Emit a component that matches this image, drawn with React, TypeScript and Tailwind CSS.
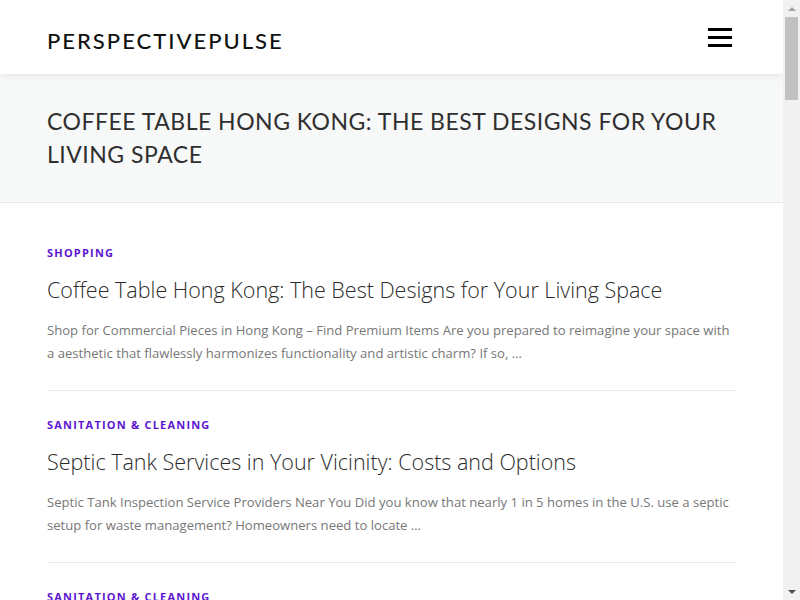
type Post = {
  category: string;
  title: string;
  excerpt: string;
};

const posts: Post[] = [
  {
    category: "Shopping",
    title: "Coffee Table Hong Kong: The Best Designs for Your Living Space",
    excerpt:
      "Shop for Commercial Pieces in Hong Kong – Find Premium Items Are you prepared to reimagine your space with a aesthetic that flawlessly harmonizes functionality and artistic charm? If so, …",
  },
  {
    category: "Sanitation & Cleaning",
    title: "Septic Tank Services in Your Vicinity: Costs and Options",
    excerpt:
      "Septic Tank Inspection Service Providers Near You Did you know that nearly 1 in 5 homes in the U.S. use a septic setup for waste management? Homeowners need to locate …",
  },
  {
    category: "Sanitation & Cleaning",
    title: "Septic Tank Pumping: How Often Should You Schedule It?",
    excerpt:
      "Septic Pumping Schedules Explained Keeping a septic system in good shape takes more than flushing with care. Regular pumping keeps …",
  },
];

const PostItem = ({ post }: { post: Post }) => (
  <article className="pt-[26px] pb-[25px] border-b border-[#e8e8e8]">
    <div className="text-[11px] leading-4 font-bold uppercase tracking-[1.2px] text-[#5c16d2]">
      {post.category}
    </div>
    <h2 className="mt-3.5 text-[21.5px] leading-[30px] font-light text-[#2b2b2b]">
      {post.title}
    </h2>
    <p className="mt-3.5 text-[13.1px] leading-[23px] text-[#777]">
      {post.excerpt}
    </p>
  </article>
);

const FakeScrollbar = () => (
  <div className="w-[17px] h-full bg-[#f1f1f1] flex flex-col items-center">
    <div className="h-[17px] flex items-center justify-center">
      <div className="w-0 h-0 border-x-[4px] border-x-transparent border-b-[4px] border-b-[#a3a3a3]" />
    </div>
    <div className="w-[13px] h-[83px] bg-[#c1c1c1]" />
    <div className="flex-1" />
    <div className="h-[17px] flex items-center justify-center">
      <div className="w-0 h-0 border-x-[4px] border-x-transparent border-t-[4px] border-t-[#505050]" />
    </div>
  </div>
);

export default function App() {
  return (
    <div className="h-screen w-full flex overflow-hidden bg-white font-['Open_Sans',sans-serif]">
      <div className="flex-1 h-full overflow-hidden">
        <header className="relative z-10 h-[74px] pl-[47px] pr-[51px] flex items-center justify-between bg-white shadow-[0_2px_6px_rgba(0,0,0,0.07)]">
          <div className="mt-2 font-['Lato',sans-serif] font-medium text-[22px] leading-none tracking-[2px] text-[#111]">
            PERSPECTIVEPULSE
          </div>
          <button className="flex flex-col gap-[5px]" aria-label="Menu">
            <span className="block w-6 h-[3px] bg-black" />
            <span className="block w-6 h-[3px] bg-black" />
            <span className="block w-6 h-[3px] bg-black" />
          </button>
        </header>

        <section className="bg-[#f7f8f8] border-b border-[#e6e6e6] px-[47px] pt-[31px] pb-[31px]">
          <h1 className="font-['Lato',sans-serif] font-normal text-[23px] leading-[33px] tracking-[0.5px] uppercase text-[#2f2f2f]">
            Coffee Table Hong Kong: The Best Designs for Your Living Space
          </h1>
        </section>

        <main className="px-[47px] pt-4">
          {posts.map((post, i) => (
            <PostItem key={i} post={post} />
          ))}
        </main>
      </div>
      <FakeScrollbar />
    </div>
  );
}
